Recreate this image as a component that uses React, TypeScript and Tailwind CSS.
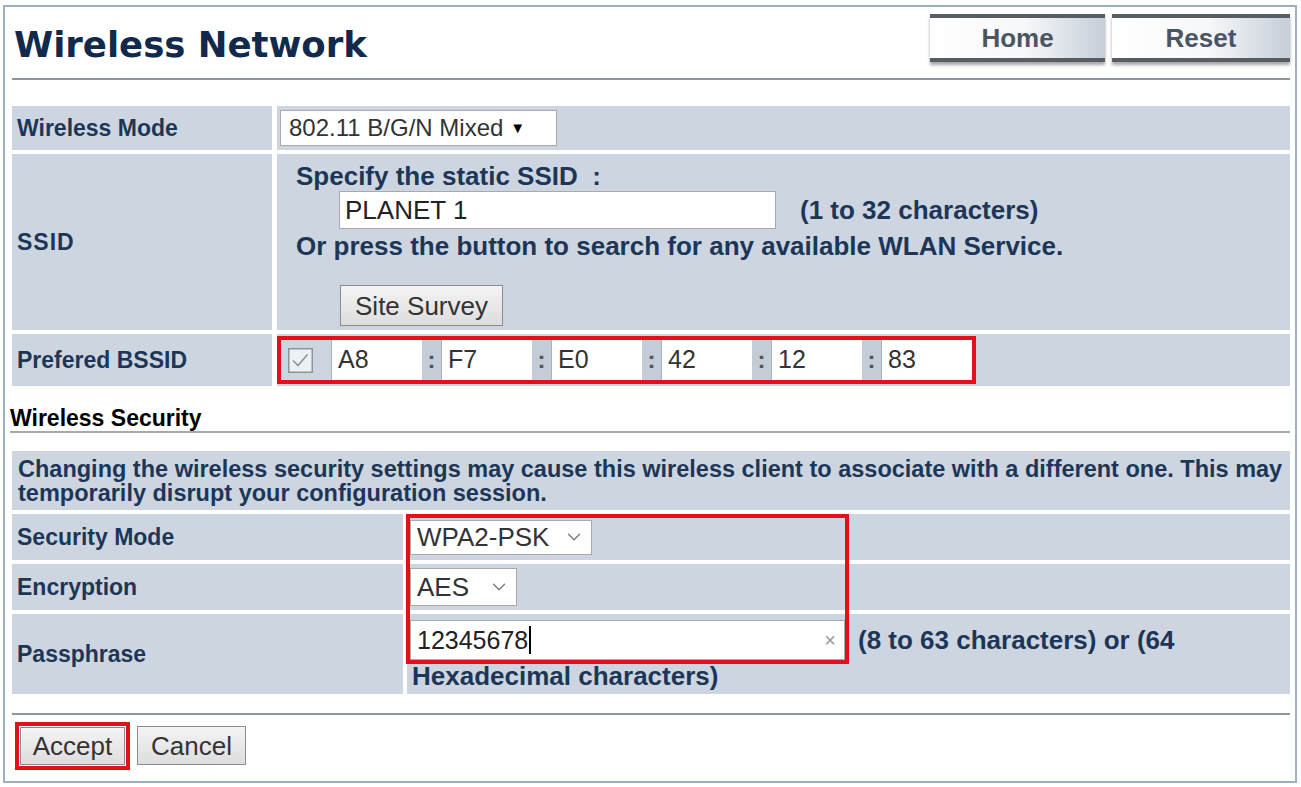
import type { ReactNode } from 'react';
import { ChevronDown } from 'lucide-react';

const bssid = ['A8', 'F7', 'E0', '42', '12', '83'];

// Grey bar button used in the page header (Home / Reset)
function BarButton({ children, className }: { children: ReactNode; className: string }) {
  return (
    <button
      className={`h-[48px] border-y-4 border-[#585d64] bg-[linear-gradient(to_right,#ffffff_0%,#f6f7f9_55%,#c6ced8_100%)] text-[26px] font-bold leading-none text-[#4b5664] shadow-[0_3px_3px_rgba(0,0,0,0.35)] ${className}`}
    >
      {children}
    </button>
  );
}

function FormButton({ children, className }: { children: ReactNode; className: string }) {
  return (
    <button
      className={`flex items-center justify-center border border-[#8c8c8c] bg-[linear-gradient(to_bottom,#f4f4f4,#dddddd)] text-[26px] font-normal leading-none text-[#333] ${className}`}
    >
      {children}
    </button>
  );
}

function Label({ children, className }: { children: ReactNode; className: string }) {
  return (
    <div className={`flex items-center bg-[#cdd6e0] pl-[5px] text-[23px] font-bold text-[#1d3658] ${className}`}>
      {children}
    </div>
  );
}

function CheckBox() {
  return (
    <svg width="25" height="25" viewBox="0 0 25 25">
      <rect x="0.75" y="0.75" width="23.5" height="23.5" fill="#eef1f4" stroke="#8d939a" strokeWidth="1.5" />
      <polyline points="5,12.5 10,17.5 19.5,6.5" fill="none" stroke="#8d939a" strokeWidth="1.6" />
    </svg>
  );
}

export default function App() {
  return (
    <div className="min-h-screen bg-white pl-[3px] pt-[5px] font-['Liberation_Sans',Arial,sans-serif]">
      <div className="h-[778px] w-[1294px] border-2 border-[#9db1c4] pl-[7px] pr-[5px]">
        {/* header */}
        <div className="flex h-[71px] items-start justify-between">
          <h1 className="ml-[2px] mt-[20px] font-['DejaVu_Sans',sans-serif] text-[35.5px] font-bold leading-none text-[#112a4c]">
            Wireless Network
          </h1>
          <div className="mt-[7px] flex gap-[7px]">
            <BarButton className="w-[175px]">Home</BarButton>
            <BarButton className="w-[178px]">Reset</BarButton>
          </div>
        </div>
        <div className="h-[2px] bg-[#8e959d]" />

        {/* wireless settings */}
        <div className="mt-[26px] grid grid-cols-[260px_1fr] gap-x-[5px] gap-y-[4px]">
          <Label className="h-[44px]">Wireless Mode</Label>
          <div className="flex items-center bg-[#cdd6e0] pl-[3px]">
            <div className="flex h-[36px] w-[277px] items-center border border-[#a9a9a9] bg-white pl-[8px] text-[24px] text-[#333]">
              802.11 B/G/N Mixed
              <span className="ml-[7px] text-[15px] text-black">▼</span>
            </div>
          </div>

          <Label className="h-[176px] tracking-[1px]">SSID</Label>
          <div className="flex flex-col bg-[#cdd6e0] pl-[19px] pt-[9px] text-[26px] font-bold leading-[26px] text-[#1d3658]">
            <div>Specify the static SSID &nbsp;:</div>
            <div className="mt-[2px] flex items-center">
              <div className="ml-[43px] flex h-[38px] w-[437px] items-center border border-[#a9a9a9] bg-white pl-[5px] text-[26px] font-normal text-[#222]">
                PLANET 1
              </div>
              <span className="ml-[24px]">(1 to 32 characters)</span>
            </div>
            <div className="mt-[4px]">Or press the button to search for any available WLAN Service.</div>
            <FormButton className="ml-[44px] mt-[26px] h-[41px] w-[163px]">Site Survey</FormButton>
          </div>

          <Label className="h-[52px]">Prefered BSSID</Label>
          <div className="flex items-center bg-[#cdd6e0]">
            <div className="flex h-[48px] border-4 border-[#e3101a]">
              <div className="flex w-[50px] items-center pl-[7px]">
                <CheckBox />
              </div>
              {bssid.map((part, i) => (
                <div key={part} className="flex">
                  {i > 0 && (
                    <div className="flex w-[19px] items-center justify-center bg-[#c4cdd7] text-[24px] font-bold text-[#555]">:</div>
                  )}
                  <div className="flex w-[91px] items-center border-l border-[#aab2bb] bg-white pl-[6px] text-[25px] text-[#333]">
                    {part}
                  </div>
                </div>
              ))}
            </div>
          </div>
        </div>

        {/* security */}
        <div className="-ml-[2px] mt-[20px] border-b-2 border-[#a5a8ac] pb-[1px] text-[23px] font-bold leading-[24px] text-black">
          Wireless Security
        </div>

        <div className="relative mt-[18px] grid grid-cols-[391px_1fr] gap-x-[4px] gap-y-[4px]">
          <div className="col-span-2 flex h-[59px] flex-col justify-center whitespace-nowrap bg-[#cdd6e0] pl-[6px] text-[23.5px] font-bold leading-[24px] text-[#1d3658]">
            <div>Changing the wireless security settings may cause this wireless client to associate with a different one. This may</div>
            <div>temporarily disrupt your configuration session.</div>
          </div>

          <Label className="h-[46px]">Security Mode</Label>
          <div className="flex items-center bg-[#cdd6e0] pl-[3px]">
            <div className="flex h-[35px] w-[182px] items-center justify-between border border-[#a9a9a9] bg-white pl-[6px] pr-[6px] text-[26px] text-[#333]">
              WPA2-PSK
              <ChevronDown size={22} strokeWidth={1.4} color="#777" />
            </div>
          </div>

          <Label className="h-[46px]">Encryption</Label>
          <div className="flex items-center bg-[#cdd6e0] pl-[3px]">
            <div className="flex h-[38px] w-[107px] items-center justify-between border border-[#a9a9a9] bg-white pl-[6px] pr-[6px] text-[26px] text-[#333]">
              AES
              <ChevronDown size={22} strokeWidth={1.4} color="#777" />
            </div>
          </div>

          <Label className="h-[80px]">Passphrase</Label>
          <div className="flex flex-col bg-[#cdd6e0] pl-[3px] pt-[6px] text-[26px] font-bold leading-[26px] text-[#1d3658]">
            <div className="flex items-center">
              <div className="flex h-[40px] w-[435px] items-center border border-[#a9a9a9] bg-white pl-[6px] pr-[8px] text-[25px] font-normal text-[#222]">
                12345678
                <span className="ml-[1px] h-[28px] w-[2px] bg-black" />
                <span className="ml-auto text-[20px] text-[#999]">×</span>
              </div>
              <span className="ml-[13px]">(8 to 63 characters) or (64</span>
            </div>
            <div className="mt-[3px] pl-[2px]">Hexadecimal characters)</div>
          </div>

          {/* highlight around the security fields */}
          <div className="pointer-events-none absolute left-[394px] top-[63px] h-[150px] w-[443px] border-4 border-[#e3101a]" />
        </div>

        <div className="mt-[19px] h-[2px] bg-[#8e959d]" />

        <div className="mt-[7px] flex items-start gap-[7px]">
          <div className="ml-[3px] border-4 border-[#e3101a] p-[1px]">
            <FormButton className="h-[38px] w-[105px]">Accept</FormButton>
          </div>
          <FormButton className="mt-[4px] h-[39px] w-[109px]">Cancel</FormButton>
        </div>
      </div>
    </div>
  );
}
